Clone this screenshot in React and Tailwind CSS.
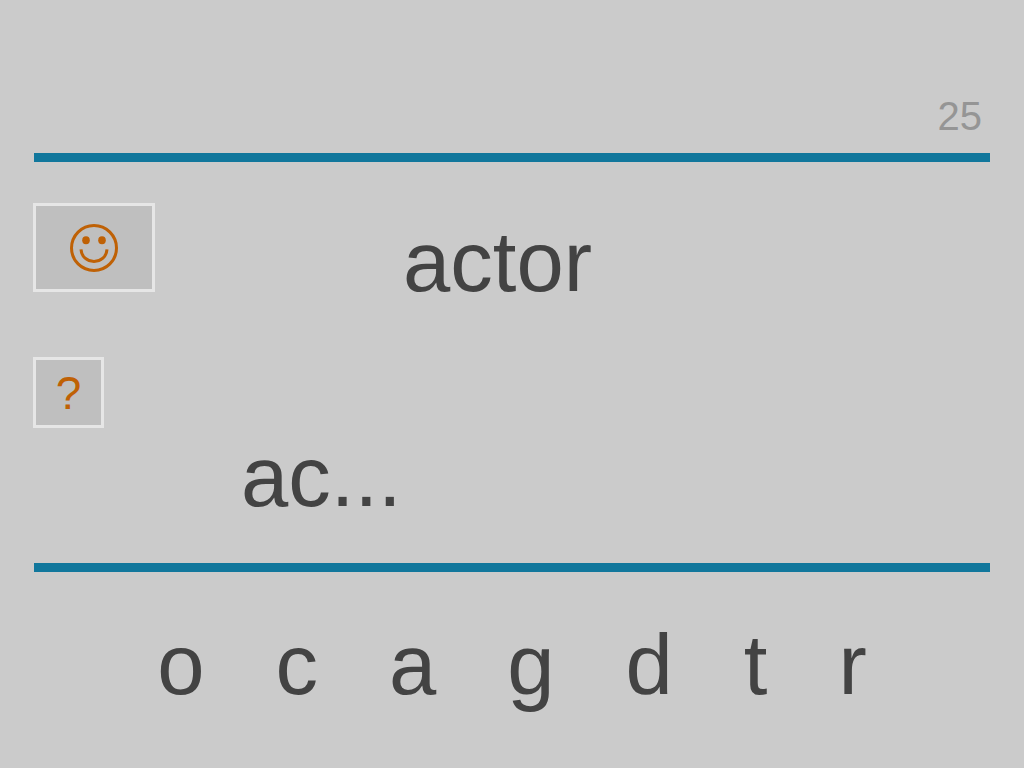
const letters = ['o', 'c', 'a', 'g', 'd', 't', 'r']

function SmileyIcon() {
  return (
    <svg viewBox="0 0 48 48" className="h-12 w-12" fill="none" stroke="currentColor" strokeWidth="3" aria-hidden="true">
      <circle cx="24" cy="24" r="22.5" />
      <ellipse cx="16" cy="16.3" rx="3.8" ry="4" fill="currentColor" stroke="none" />
      <ellipse cx="32" cy="16.3" rx="3.8" ry="4" fill="currentColor" stroke="none" />
      <path d="M11 25.3C11.6 33 17 37.4 24 37.4S36.4 33 37 25.3" />
    </svg>
  )
}

function Divider() {
  return <hr className="mx-px h-[9px] border-0 bg-[#11779c]" />
}

function App() {
  return (
    <main className="min-h-screen bg-[#cbcbcb] px-[33px] pt-24 font-['Liberation_Sans',Arial,sans-serif] text-[#434343]">
      <header className="mb-[17px] pr-[9px] text-right text-[40px] leading-10 text-[#959595]">25</header>
      <Divider />

      <section className="pt-[41px]">
        <div className="flex items-start">
          <button
            type="button"
            aria-label="New word"
            className="flex h-[89px] w-[122px] items-center justify-center border-[3px] border-[#e6e6e6] bg-[#bfbfbf] text-[#bf6105]"
          >
            <SmileyIcon />
          </button>
          <h1 className="mt-[11px] ml-[248px] text-[85px] leading-[96px]">actor</h1>
        </div>
        <button
          type="button"
          aria-label="Help"
          className="mt-[47px] flex h-[71px] w-[71px] items-center justify-center border-[3px] border-[#e6e6e6] bg-[#bfbfbf] text-[46px] leading-[52px] text-[#bf6105]"
        >
          ?
        </button>
        <p className="mt-px mb-[38px] ml-[208px] text-[85px] leading-[96px]">ac...</p>
      </section>

      <Divider />
      <div className="flex justify-center gap-[71px] pt-[45px]">
        {letters.map((letter) => (
          <button key={letter} type="button" className="text-[85px] leading-[96px]">
            {letter}
          </button>
        ))}
      </div>
    </main>
  )
}

export default App
